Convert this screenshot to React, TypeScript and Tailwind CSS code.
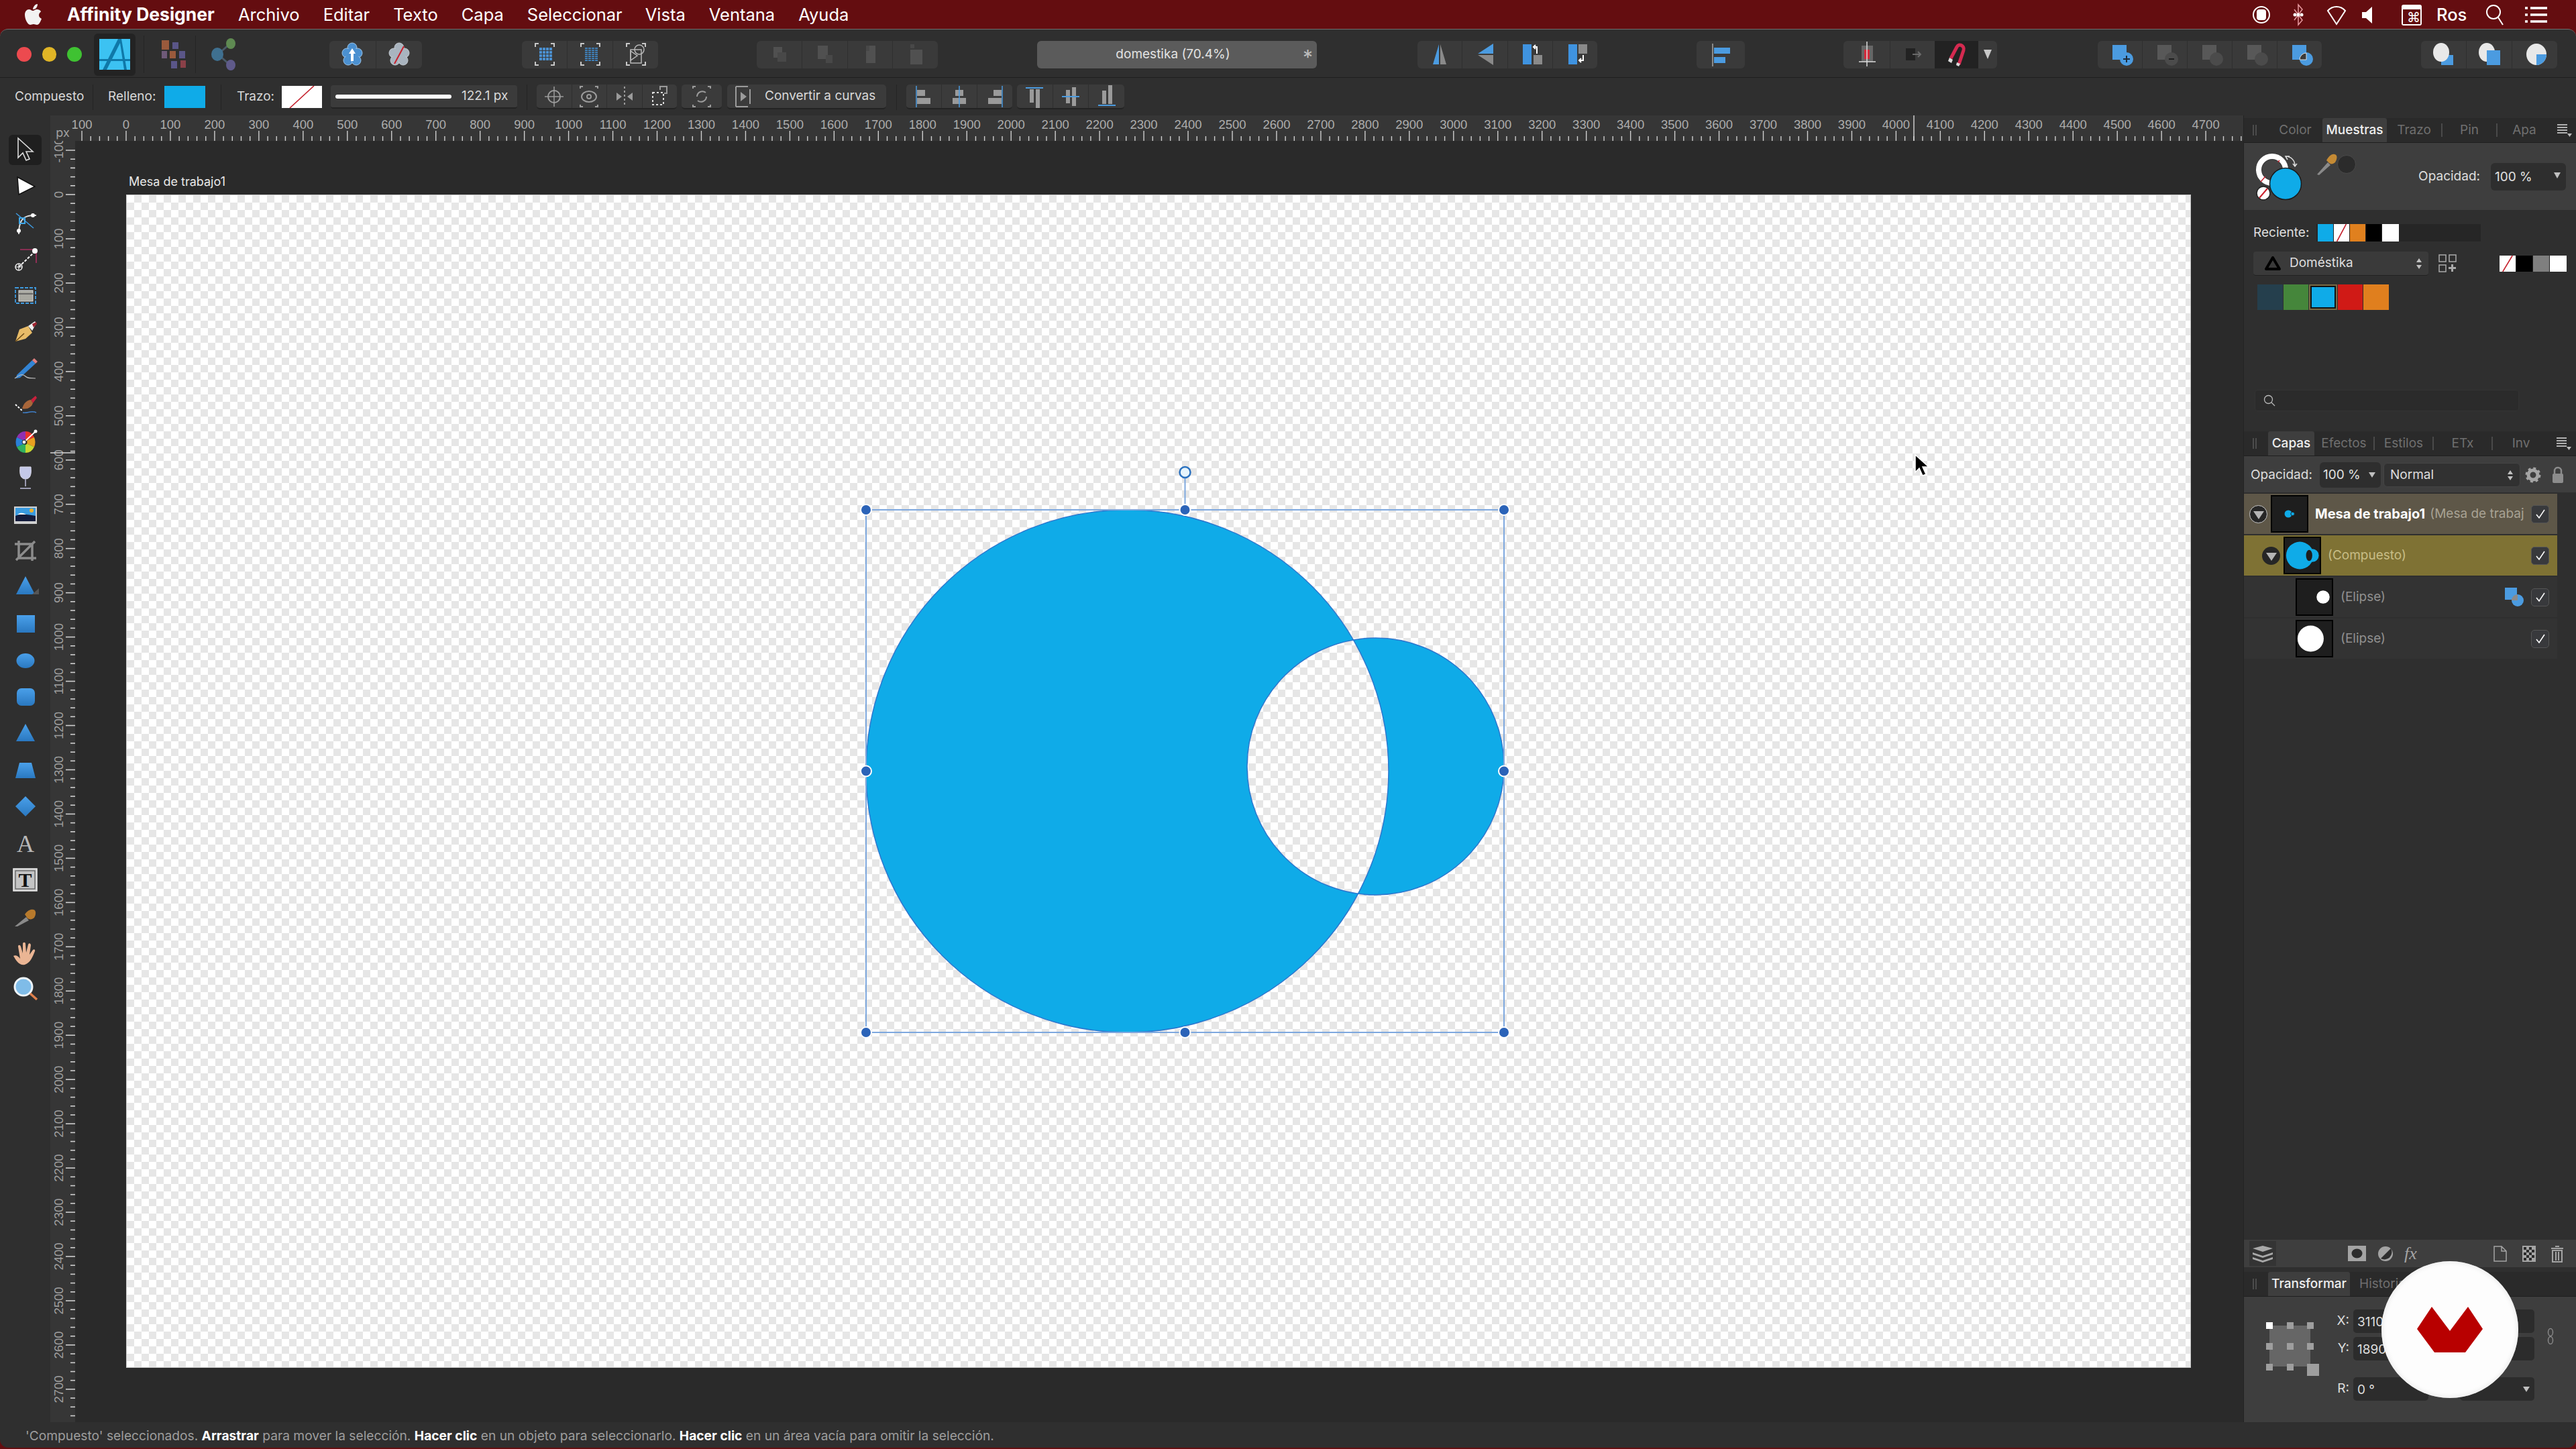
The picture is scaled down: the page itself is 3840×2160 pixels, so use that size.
import type { ReactNode } from "react";

const BLUE = "#0fabe8";

function Group({ className, children }: { className: string; children: ReactNode }) {
  return <div className={`flex h-[41px] shrink-0 overflow-hidden rounded-[6px] bg-[#3a3a3a] ${className}`}>{children}</div>;
}

function Cell({ children, dark }: { children?: ReactNode; dark?: boolean }) {
  return (
    <div className={`flex flex-1 items-center justify-center border-r border-[#2f2f2f] last:border-r-0 ${dark ? "bg-[#222222]" : ""}`}>
      {children}
    </div>
  );
}

function Ico({ children, w = 44, h = 38 }: { children: ReactNode; w?: number; h?: number }) {
  return (
    <svg width={w} height={h} viewBox={`0 0 ${w} ${h}`} className="shrink-0">
      {children}
    </svg>
  );
}

function Flower({ off }: { off?: boolean }) {
  const c = off ? "#a9b4bf" : "#4b90d0";
  return (
    <Ico>
      <g fill={c} stroke={off ? "#c6ccd2" : "#9cc4e8"} strokeWidth="1">
        <circle cx="22" cy="9" r="7" />
        <circle cx="14" cy="17" r="7" />
        <circle cx="30" cy="17" r="7" />
        <circle cx="16" cy="28" r="7" />
        <circle cx="28" cy="28" r="7" />
      </g>
      <circle cx="22" cy="19" r="10" fill={c} />
      {off ? (
        <path d="M15 33 29 7" stroke="#c8202c" strokeWidth="2" />
      ) : (
        <path d="M22 10 17 18h3v11h4V18h3z" fill="#fff" />
      )}
    </Ico>
  );
}

function Brackets({ children }: { children: ReactNode }) {
  return (
    <Ico>
      <path d="M8 8V3h5M31 3h5v5M36 30v5h-5M13 35H8v-5" fill="none" stroke="#c8c8c8" strokeWidth="2" />
      {children}
    </Ico>
  );
}

function Bars({ fine }: { fine?: boolean }) {
  const rows = fine ? [9, 12, 15, 18, 21, 24, 27] : [9, 14, 19, 24];
  return (
    <>
      {rows.map((y) =>
        [14, 19, 24, 29].map((x) => (
          <rect key={`${x}-${y}`} x={x} y={y} width="4" height={fine ? 2 : 4} fill={fine ? "#3f7fb8" : "#4b90d0"} />
        )),
      )}
    </>
  );
}

function Dim({ a, b }: { a: string; b: string }) {
  return (
    <Ico>
      <path d={a} fill="#505050" />
      <path d={b} fill="#484848" />
    </Ico>
  );
}

function FlipV() {
  return (
    <Ico>
      <path d="M21 4v30H12z" fill="#4b9be0" />
      <path d="M23 4v30h9z" fill="#8a8a8a" />
    </Ico>
  );
}

function FlipH() {
  return (
    <Ico>
      <path d="M35 3v15H12z" fill="#4b9be0" />
      <path d="M35 35V20H12z" fill="#8a8a8a" />
    </Ico>
  );
}

function Rot({ down }: { down?: boolean }) {
  return (
    <Ico>
      <rect x={down ? 12 : 11} y="4" width="13" height="30" fill="#3f93e0" />
      <rect x="27" y={down ? 4 : 20} width="13" height="14" fill="#8a8a8a" />
      <path d={down ? "M34 20v8h-5M31 25l-3 3 3 3" : "M32 18V8h-3M30 5l-3 3 3 3"} fill="none" stroke="#fff" strokeWidth="2" />
    </Ico>
  );
}

function AlignLeftBlue() {
  return (
    <Ico w={40}>
      <path d="M8 3v34" stroke="#8a8a8a" strokeWidth="2" />
      <rect x="10" y="9" width="24" height="9" fill="#4b9be0" />
      <rect x="10" y="23" width="17" height="9" fill="#4b9be0" />
    </Ico>
  );
}

function BoolOp({ tint, sign, third }: { tint: boolean; sign?: string; third?: boolean }) {
  const a = tint ? "#4b9be0" : "#585858";
  return (
    <Ico>
      <rect x="11" y="5" width="21" height="22" fill={a} />
      <circle cx="32" cy="26" r="10" fill={third ? "#4b9be0" : tint ? "#4b9be0" : "#4b4b4b"} />
      {third && <path d="M22 27h10V17a10 10 0 0 0-10 10z" fill="#3a3a3a" stroke="#dddddd" strokeWidth="1" />}
      {sign === "+" && <path d="M27 26h10M32 21v10" stroke="#1e2a38" strokeWidth="2" />}
      {sign === "-" && <path d="M28 26h8" stroke="#1e1e1e" strokeWidth="2" />}
    </Ico>
  );
}

function Order({ variant }: { variant: number }) {
  return (
    <Ico>
      {variant === 0 && (
        <>
          <rect x="18" y="20" width="18" height="15" fill="#4b9be0" />
          <ellipse cx="18" cy="16" rx="12" ry="14" fill="#e8e8e8" />
        </>
      )}
      {variant === 1 && (
        <>
          <ellipse cx="18" cy="16" rx="12" ry="14" fill="#e8e8e8" />
          <rect x="18" y="13" width="20" height="22" fill="#4b9be0" />
        </>
      )}
      {variant === 2 && (
        <>
          <ellipse cx="24" cy="19" rx="15" ry="16" fill="#e8e8e8" />
          <path d="M24 19h15a15 16 0 0 1-15 16z" fill="#4b9be0" />
        </>
      )}
    </Ico>
  );
}

function Ctx({ children }: { children: ReactNode }) {
  return (
    <svg width="34" height="36" viewBox="0 0 34 36" fill="none" stroke="#9b9b9b" strokeWidth="2">
      {children}
    </svg>
  );
}

function Sep({ className }: { className: string }) {
  return <div className={`h-[38px] w-px shrink-0 bg-[#242424] ${className}`} />;
}

function CtxGroup({ className, children }: { className: string; children: ReactNode }) {
  return (
    <div className={`flex h-[37px] shrink-0 overflow-hidden rounded-[5px] border-b-2 border-[#232323] bg-[#3b3b3b] ${className}`}>
      {children}
    </div>
  );
}

function AlignIcon({ axis, pos }: { axis: "v" | "h"; pos: number }) {
  if (axis === "v") {
    const lx = [6, 17, 28][pos];
    const w1 = 12;
    const w2 = 20;
    const x = (w: number) => (pos === 0 ? lx + 1 : pos === 1 ? lx - w / 2 : lx - w - 1);
    return (
      <svg width="34" height="36" viewBox="0 0 34 36">
        <rect x={x(w1)} y="8" width={w1} height="9" fill="#9a9a9a" />
        <rect x={x(w2)} y="20" width={w2} height="9" fill="#9a9a9a" />
        <path d={`M${lx} 2v32`} stroke="#4b9be0" strokeWidth="1.5" />
      </svg>
    );
  }
  const ly = [5, 18, 31][pos];
  const y = (h: number) => (pos === 0 ? ly + 2 : pos === 1 ? ly - h / 2 : ly - h - 2);
  return (
    <svg width="34" height="36" viewBox="0 0 34 36">
      <rect x="10" y={y(20)} width="6" height="20" fill="#9a9a9a" />
      <rect x="19" y={y(28)} width="6" height="28" fill="#9a9a9a" />
      <path d={`M4 ${ly}h26`} stroke="#4b9be0" strokeWidth="2" />
    </svg>
  );
}

function TitleBar() {
  return (
    <div className="flex h-[72px] shrink-0 items-center border-b border-[#1f1f1f] pt-[3px]">
      <div className="ml-[25px] flex w-[97px] shrink-0 gap-[16px]">
        <div className="h-[22px] w-[22px] rounded-full bg-[#ec4a4f]" />
        <div className="h-[22px] w-[22px] rounded-full bg-[#e0b526]" />
        <div className="h-[22px] w-[22px] rounded-full bg-[#3fc232]" />
      </div>
      <div className="ml-[18px] flex h-[63px] w-[62px] shrink-0 items-center justify-center rounded-[6px] bg-[#232323]">
        <svg width="46" height="46" viewBox="0 0 46 46">
          <rect width="46" height="46" fill="#3cc2f2" />
          <path d="M28 0 5 46h6L31 6l6 40h4L33 0z" fill="#0f78a8" />
          <path d="M0 30h46v3H0z" fill="#0f78a8" />
        </svg>
      </div>
      <div className="ml-[12px] h-[56px] w-px shrink-0 bg-[#242424]" />
      <div className="ml-[20px] flex w-[46px] shrink-0 justify-center">
        <svg width="46" height="46" viewBox="0 0 46 46">
          <rect x="6" y="2" width="11" height="14" fill="#9a5a3c" />
          <rect x="22" y="5" width="9" height="10" fill="#5a5688" />
          <rect x="6" y="18" width="8" height="11" fill="#6e5a78" />
          <rect x="18" y="18" width="9" height="11" fill="#9a5a3c" />
          <rect x="32" y="18" width="9" height="11" fill="#5a5688" />
          <rect x="20" y="33" width="9" height="11" fill="#5a5688" />
          <rect x="34" y="32" width="8" height="11" fill="#8a4048" />
        </svg>
      </div>
      <div className="ml-[10px] h-[56px] w-px shrink-0 bg-[#242424]" />
      <div className="ml-[16px] flex w-[50px] shrink-0 justify-center">
        <svg width="44" height="50" viewBox="0 0 44 50">
          <path d="M14 25 32 9M14 25l18 16" stroke="#4a5a68" strokeWidth="3" />
          <ellipse cx="33" cy="9" rx="7" ry="8" fill="#5f8a52" />
          <ellipse cx="13" cy="25" rx="9" ry="10" fill="#3f7090" />
          <ellipse cx="33" cy="41" rx="7" ry="8" fill="#5f5a8a" />
        </svg>
      </div>
      <Group className="ml-[133px] w-[138px]">
        <Cell><Flower /></Cell>
        <Cell><Flower off /></Cell>
      </Group>
      <Group className="ml-[149px] w-[203px]">
        <Cell><Brackets><Bars /></Brackets></Cell>
        <Cell><Brackets><Bars fine /></Brackets></Cell>
        <Cell>
          <Brackets>
            <rect x="14" y="12" width="16" height="20" fill="none" stroke="#b8b8b8" strokeWidth="1.5" />
            <circle cx="27" cy="12" r="7" fill="none" stroke="#b8b8b8" strokeWidth="1.5" />
            <path d="M14 14v14l10-7z" fill="none" stroke="#b8b8b8" strokeWidth="1.5" />
          </Brackets>
        </Cell>
      </Group>
      <Group className="ml-[147px] w-[270px]">
        <Cell><Dim a="M14 8h13v16h-13z" b="M20 16h13v14h-13z" /></Cell>
        <Cell><Dim a="M12 6h15v20H12z" b="M24 20h10v12H24z" /></Cell>
        <Cell><Dim a="M16 6h14v26H16z" b="M16 6h5v8h-5z" /></Cell>
        <Cell><Dim a="M14 12h18v22H14z" b="M14 4h6v6h-6z" /></Cell>
      </Group>
      <div className="relative ml-[148px] flex h-[41px] w-[417px] shrink-0 items-center justify-center rounded-[6px] bg-[#5b5b5b] text-[19px] text-[#e2e2e2]">
        <span className="mr-[12px]">domestika (70.4%)</span>
        <span className="absolute right-[6px] top-[6px] text-[30px] leading-[36px] text-[#bdbdbd]">*</span>
      </div>
      <Group className="ml-[150px] w-[268px]">
        <Cell><FlipV /></Cell>
        <Cell><FlipH /></Cell>
        <Cell><Rot /></Cell>
        <Cell><Rot down /></Cell>
      </Group>
      <Group className="ml-[148px] w-[72px]">
        <Cell><AlignLeftBlue /></Cell>
      </Group>
      <Group className="ml-[147px] w-[229px]">
        <div className="flex w-[70px] items-center justify-center border-r border-[#2f2f2f]">
          <Ico>
            <path d="M14 6h17v24H14z" fill="#666" />
            <path d="M18 12h8v14h-8z" fill="#d22a3c" />
            <path d="M10 30h25M22 0v37" stroke="#ddd" strokeWidth="1.5" />
          </Ico>
        </div>
        <div className="flex w-[66px] items-center justify-center">
          <Ico>
            <rect x="12" y="10" width="14" height="18" fill="#222" />
            <path d="M22 19h12m-4-4 4 4-4 4" stroke="#6a6a6a" strokeWidth="2" fill="none" />
          </Ico>
        </div>
        <div className="flex w-[65px] items-center justify-center bg-[#222222]">
          <Ico>
            <path d="M13 25 22 8c3-6 12-2 10 5l-7 21" fill="none" stroke="#d52a50" strokeWidth="5" />
            <path d="M11 24l5 3-2 5-5-3zM22 31l5 2-2 4-4-2z" fill="#ddd" />
          </Ico>
        </div>
        <div className="flex flex-1 items-start justify-center pt-[13px]">
          <svg width="12" height="14" viewBox="0 0 12 14"><path d="M0 0h12L6 14z" fill="#c8c8c8" /></svg>
        </div>
      </Group>
      <Group className="ml-[150px] w-[334px]">
        <Cell><BoolOp tint sign="+" /></Cell>
        <Cell><BoolOp tint={false} sign="-" /></Cell>
        <Cell><BoolOp tint={false} /></Cell>
        <Cell><BoolOp tint={false} /></Cell>
        <Cell><BoolOp tint third /></Cell>
      </Group>
      <Group className="ml-[148px] w-[203px]">
        <Cell><Order variant={0} /></Cell>
        <Cell><Order variant={1} /></Cell>
        <Cell><Order variant={2} /></Cell>
      </Group>
    </div>
  );
}

function NoneSwatch({ className }: { className: string }) {
  return (
    <div className={`relative shrink-0 overflow-hidden bg-white ${className}`}>
      <svg className="absolute inset-0 h-full w-full" viewBox="0 0 40 40" preserveAspectRatio="none">
        <path d="M8 40 32 0" stroke="#c4202c" strokeWidth="1.6" vectorEffect="non-scaling-stroke" />
      </svg>
    </div>
  );
}

function ContextBar() {
  return (
    <div className="flex h-[56px] shrink-0 items-center pt-[1px] text-[19px] text-[#d8d8d8]">
      <span className="ml-[22px] w-[103px] shrink-0">Compuesto</span>
      <Sep className="ml-[13px]" />
      <span className="ml-[22px] w-[72px] shrink-0">Relleno:</span>
      <div className="ml-[12px] h-[33px] w-[61px] shrink-0 bg-[#0fabe8]" />
      <Sep className="ml-[23px]" />
      <span className="ml-[23px] w-[55px] shrink-0">Trazo:</span>
      <NoneSwatch className="ml-[12px] h-[33px] w-[60px]" />
      <div className="ml-[13px] flex h-[35px] w-[278px] shrink-0 items-center rounded-[4px] border-b-2 border-[#232323] bg-[#3b3b3b] pl-[7px]">
        <div className="h-[6px] w-[173px] rounded-full bg-white" />
        <span className="ml-[15px] whitespace-nowrap text-[19px]">122.1 px</span>
      </div>
      <Sep className="ml-[14px]" />
      <CtxGroup className="ml-[14px] w-[209px]">
        <Cell><Ctx><circle cx="17" cy="18" r="9" /><path d="M17 3v30M3 18h28" strokeWidth="1.5" /></Ctx></Cell>
        <Cell><Ctx><path d="M4 6V3h4M26 3h4v3M30 30v3h-4M8 33H4v-3" /><ellipse cx="17" cy="18" rx="11" ry="8" /><circle cx="17" cy="18" r="3" /></Ctx></Cell>
        <Cell><Ctx><path d="M17 3v30" strokeDasharray="3 3" /><path d="M5 12l8 6-8 6zM29 12l-8 6 8 6z" fill="#9b9b9b" stroke="none" /></Ctx></Cell>
        <Cell><Ctx><rect x="7" y="12" width="16" height="18" stroke="#ddd" strokeDasharray="3 3" /><path d="M18 8V3h10v10h-4" /></Ctx></Cell>
      </CtxGroup>
      <CtxGroup className="ml-[7px] w-[60px]">
        <Cell><Ctx><path d="M4 6V3h4M26 3h4v3M30 30v3h-4M8 33H4v-3" /><path d="M10 18a8 8 0 0 1 13-6m1 6a8 8 0 0 1-13 6" /></Ctx></Cell>
      </CtxGroup>
      <CtxGroup className="ml-[8px] w-[237px] items-center pl-[8px]">
        <Ctx><path d="M5 3h18M5 33h18M5 3v30M26 7v22" /><path d="M12 11l9 7-9 7z" fill="#9b9b9b" stroke="none" /></Ctx>
        <span className="ml-[14px] whitespace-nowrap text-[19px]">Convertir a curvas</span>
      </CtxGroup>
      <Sep className="ml-[15px]" />
      <CtxGroup className="ml-[14px] w-[158px]">
        {[0, 1, 2].map((p) => (
          <Cell key={p}><AlignIcon axis="v" pos={p} /></Cell>
        ))}
      </CtxGroup>
      <CtxGroup className="ml-[7px] w-[160px]">
        {[0, 1, 2].map((p) => (
          <Cell key={p}><AlignIcon axis="h" pos={p} /></Cell>
        ))}
      </CtxGroup>
    </div>
  );
}

const wheelColors = ["#e8342a", "#e8a020", "#c8d830", "#30b060", "#2a80d8", "#9030b0"];

const toolIcons: ReactNode[] = [
  <path d="M11 5v29l7-7 5 11 5-2-5-11h10z" fill="none" stroke="#dcdcdc" strokeWidth="1.6" />,
  <path d="M10 8 36 22 12 34z" fill="#fff" stroke="#111" strokeWidth="1.5" />,
  <>
    <path d="M8 8l26 22" stroke="#3f9be0" strokeWidth="1.5" />
    <path d="M16 19c4-7 12-8 22-8M16 19c-3 5-4 10-4 20" fill="none" stroke="#ddd" strokeWidth="2" />
    <rect x="13" y="15" width="8" height="8" fill="none" stroke="#3fa7e8" strokeWidth="2" />
    <circle cx="33" cy="11" r="3" fill="#fff" />
    <circle cx="12" cy="34" r="3" fill="#fff" />
  </>,
  <>
    <path d="M14 8h24v20" fill="none" stroke="#a83060" strokeWidth="1.6" />
    <path d="M12 34 36 11" stroke="#fff" strokeWidth="2" strokeDasharray="4 2" />
    <circle cx="36" cy="10" r="4" fill="#fff" />
    <circle cx="12" cy="34" r="5" fill="none" stroke="#eee" strokeWidth="1.5" />
    <path d="M7 34h10M12 29v10" stroke="#eee" strokeWidth="1.2" />
  </>,
  <>
    <rect x="7" y="10" width="30" height="23" fill="none" stroke="#3f9be0" strokeWidth="1.8" strokeDasharray="5 2" />
    <rect x="12" y="14" width="21" height="16" fill="#a8a8a0" stroke="#ddd" />
    <path d="M12 19h21" stroke="#555" strokeWidth="1.5" />
  </>,
  <>
    <path d="M7 36 13 18 26 13l6 10-10 9z" fill="#e8bc68" />
    <path d="M7 36 20 24" stroke="#6a4a18" strokeWidth="1.5" />
    <path d="M26 13 36 6l2 3-6 11z" fill="#efefef" />
    <path d="M32 10l6-3 1 3-5 5z" fill="#9c2430" />
  </>,
  <>
    <path d="M9 31 32 9l5 5-23 21-6 1z" fill="#3384d4" />
    <path d="M32 9l3-3 5 5-3 3z" fill="#e08080" />
    <path d="M6 36c8-6 12-7 16-3s8 2 15 3" fill="none" stroke="#bbb" strokeWidth="1.2" />
  </>,
  <>
    <path d="M30 14l7-6 2 3-6 8z" fill="#c8203c" />
    <path d="M17 27c2-8 8-13 13-13l3 5c-2 6-8 10-16 8z" fill="#a8663a" />
    <path d="M7 21 18 31" stroke="#fff" strokeWidth="2" strokeDasharray="3 2" />
    <path d="M18 33c7 2 12-4 20 0" fill="none" stroke="#3f7fc8" strokeWidth="1.5" />
  </>,
  <>
    <g transform="rotate(-90 22 23)">
      {wheelColors.map((c, i) => (
        <ellipse key={c} cx="22" cy="23" rx="10" ry="8.5" fill="none" stroke={c} strokeWidth="12" pathLength="60" strokeDasharray="10 50" strokeDashoffset={-i * 10} />
      ))}
    </g>
    <path d="M20 23 36 8" stroke="#fff" strokeWidth="1.8" />
    <circle cx="20" cy="23" r="3" fill="#fff" stroke="#222" />
    <circle cx="37" cy="7" r="2.5" fill="#fff" />
  </>,
  <>
    <path d="M14 5h16c1 10 0 18-8 18S13 15 14 5z" fill="#c4c8e8" stroke="#d8d8e8" />
    <path d="M22 23v11M14 37h16" stroke="#9a9ab0" strokeWidth="2" />
  </>,
  <>
    <rect x="5" y="10" width="34" height="26" fill="#d0d0d0" />
    <rect x="7" y="12" width="30" height="20" fill="#3a9be0" />
    <path d="M7 24c8-4 20-2 30 0v8H7z" fill="#141c3c" />
    <path d="M10 22c5-4 10-2 13 0z" fill="#fff" />
    <circle cx="31" cy="16" r="3" fill="#e8b030" />
  </>,
  <path d="M8 36 36 8M12 7v26h26M6 12h26v25" fill="none" stroke="#8c8c8c" strokeWidth="3.5" />,
  <>
    <path d="M22 5 36 32H8z" fill="url(#toolBlue)" />
    <path d="M42 32v-9l-10 9z" fill="#555" />
  </>,
  <rect x="9" y="9" width="27" height="26" fill="url(#toolBlue)" />,
  <ellipse cx="22" cy="22" rx="13.5" ry="11" fill="url(#toolBlue)" />,
  <rect x="9" y="9" width="27" height="26" rx="7" fill="url(#toolBlue)" />,
  <path d="M22 8 36 34H8z" fill="url(#toolBlue)" />,
  <path d="M13 11h18l6 23H7z" fill="url(#toolBlue)" />,
  <path d="M22 7 37 22 22 37 7 22z" fill="url(#toolBlue)" />,
  <text x="22" y="35" textAnchor="middle" fontSize="36" fill="#b8b8b8" fontFamily="'Liberation Serif', serif">A</text>,
  <>
    <rect x="4" y="6" width="35" height="33" fill="#c4c4c4" stroke="#eee" strokeWidth="1.5" />
    <rect x="7" y="9" width="29" height="27" fill="none" stroke="#444" />
    <text x="21.5" y="33" textAnchor="middle" fontSize="30" fontWeight="700" fill="#111" fontFamily="'Liberation Serif', serif">T</text>
  </>,
  <>
    <path d="M6 38 23 24l4 5-17 9z" fill="#8a8a8a" />
    <path d="M21 20c4-6 9-8 13-7s4 7 1 12c-3 3-7 3-10 1z" fill="#b87a2c" />
  </>,
  <path d="M4 27c3-2 7 0 10 4l-3-18c0-3 3-3 4 0l3 10 0-14c0-3 4-3 4 0l1 13 3-12c1-3 4-2 4 1l-2 14 5-7c2-2 4 0 3 2-3 7-6 17-15 20-8 2-13-6-17-13z" fill="#eab594" />,
  <>
    <circle cx="19" cy="19" r="13" fill="#7fbce8" stroke="#eef4f8" strokeWidth="3" />
    <path d="M29 29l10 9" stroke="#e0804c" strokeWidth="3.5" />
  </>,
];

function ToolRail() {
  return (
    <div className="flex w-[75px] shrink-0 flex-col items-center pt-[24px]">
      <svg width="0" height="0" className="absolute">
        <defs>
          <linearGradient id="toolBlue" x1="0" y1="0" x2="0" y2="1">
            <stop offset="0" stopColor="#4aa0ea" />
            <stop offset="1" stopColor="#2a78c0" />
          </linearGradient>
        </defs>
      </svg>
      {toolIcons.map((icon, i) => (
        <div key={i} className="flex h-[54.4px] w-[49px] shrink-0 items-center justify-center">
          <div className={`flex h-[45px] w-[49px] items-center justify-center rounded-[6px] ${i === 0 ? "bg-[#1f1f1f]" : ""}`}>
            <svg width="44" height="44" viewBox="0 0 44 44">
              {icon}
            </svg>
          </div>
        </div>
      ))}
    </div>
  );
}

const UNIT = 65.96;

function HRuler() {
  const labels = Array.from({ length: 49 }, (_, i) => i - 1);
  const ticks = Array.from({ length: 49 * 5 }, (_, i) => i);
  return (
    <svg width="3232" height="38" className="block overflow-visible">
      {ticks.map((i) => {
        const x = 76 - UNIT + (i * UNIT) / 5;
        return <line key={i} x1={x} x2={x} y1={i % 5 === 0 ? 23 : 31} y2="38" stroke="#cfcfcf" strokeWidth="1.4" />;
      })}
      {labels.map((n) => (
        <text key={n} x={76 + n * UNIT} y="20" textAnchor="middle" fontSize="18.5" fill="#adadad" fontFamily="'Liberation Sans', sans-serif">
          {Math.abs(n * 100)}
        </text>
      ))}
      <line x1="2741" x2="2741" y1="0" y2="38" stroke="#d8d8d8" strokeWidth="1.4" />
    </svg>
  );
}

function VRuler() {
  const labels = Array.from({ length: 29 }, (_, i) => i - 1);
  const ticks = Array.from({ length: 29 * 5 }, (_, i) => i);
  return (
    <svg width="37" height="1910" className="block">
      {ticks.map((i) => {
        const y = 80 - UNIT + (i * UNIT) / 5;
        return <line key={i} x1={i % 5 === 0 ? 23 : 30} x2="37" y1={y} y2={y} stroke="#cfcfcf" strokeWidth="1.6" />;
      })}
      {labels.map((n) => (
        <text key={n} x="0" y="0" transform={`translate(19 ${80 + n * UNIT}) rotate(-90)`} textAnchor="middle" fontSize="18.5" fill="#9f9f9f" fontFamily="'Liberation Sans', sans-serif">
          {n * 100}
        </text>
      ))}
      <line x1="0" x2="37" y1="465" y2="465" stroke="#d8d8d8" strokeWidth="1.4" />
    </svg>
  );
}

function Handle({ cx, cy }: { cx: number; cy: number }) {
  return <circle cx={cx} cy={cy} r="8" fill="#2b63b8" stroke="#ffffff" strokeWidth="2" />;
}

// the selected compound: two ellipses, their overlap knocked out
function CompoundShape() {
  const x0 = 1102;
  const y0 = 469;
  const x1 = 2053;
  const y1 = 1248;
  const mx = (x0 + x1) / 2;
  const my = (y0 + y1) / 2;
  return (
    <svg width="3078" height="1749" className="absolute left-0 top-0">
      <path
        fillRule="evenodd"
        fill={BLUE}
        stroke="#2c77cf"
        strokeWidth="1.5"
        d={`M${x0} ${my}a389.5 389.5 0 1 0 779 0a389.5 389.5 0 1 0 -779 0z M1670 851.5a191.5 191.5 0 1 0 383 0a191.5 191.5 0 1 0 -383 0z`}
      />
      <rect x={x0} y={y0} width={x1 - x0} height={y1 - y0} fill="none" stroke="#7ea8de" strokeWidth="2" />
      <line x1={mx} x2={mx} y1={y0} y2="413" stroke="#7ea8de" strokeWidth="2" />
      <circle cx={mx} cy="413" r="8" fill="#e6f4fc" stroke="#2b72c0" strokeWidth="2.5" />
      {[x0, mx, x1].flatMap((cx) =>
        [y0, my, y1].map((cy) => (cx === mx && cy === my ? null : <Handle key={`${cx}-${cy}`} cx={cx} cy={cy} />)),
      )}
    </svg>
  );
}

function Canvas() {
  return (
    <div className="relative flex-1 bg-[#2a2a2a] pl-[76px] pt-[80px]">
      <div className="absolute left-[80px] top-[50px] text-[18px] leading-[22px] text-[#e8e8e8]">Mesa de trabajo1</div>
      <div className="relative h-[1749px] w-[3078px] border border-[#c8c8c8] bg-[repeating-conic-gradient(#e6e6e6_0%_25%,#ffffff_0%_50%)] bg-size-[22px_22px]">
        <CompoundShape />
      </div>
      <svg width="28" height="36" viewBox="0 0 28 36" className="absolute left-[2741px] top-[466px]">
        <path d="M2 2v26l6-6 5 11 5-2-5-11h9z" fill="#000" stroke="#fff" strokeWidth="1.5" />
      </svg>
    </div>
  );
}

function Tabs({ tabs, active, menu = true }: { tabs: { label: string; w: string; sep?: boolean }[]; active: string; menu?: boolean }) {
  return (
    <div className="flex h-[37px] shrink-0 items-stretch border-b border-[#1f1f1f] bg-[#2a2a2a] text-[19px] leading-[22px]">
      <div className="flex w-[36px] shrink-0 items-center pl-[13px]">
        <div className="h-[16px] w-[6px] border-x-2 border-[#4c4c4c]" />
      </div>
      {tabs.map((t) => (
        <div
          key={t.label}
          className={`flex shrink-0 items-center justify-center ${t.w} ${
            t.label === active ? "rounded-t-[3px] bg-[#3e3e3e] font-medium text-[#eeeeee]" : "text-[#6f6f6f]"
          }`}
        >
          <span className={t.sep ? "flex h-[20px] w-full items-center justify-center border-r-2 border-[#4a4a4a]" : ""}>{t.label}</span>
        </div>
      ))}
      {menu && (
        <div className="ml-auto flex w-[38px] items-center justify-center">
          <svg width="24" height="20" viewBox="0 0 24 20">
            <path d="M2 2h15M2 6h15M2 10h15M2 14h15" stroke="#dddddd" strokeWidth="1.5" />
            <path d="M17 15h7l-3.500 5z" fill="#bbbbbb" />
          </svg>
        </div>
      )}
    </div>
  );
}

function FillStroke() {
  return (
    <svg width="76" height="76" viewBox="0 0 76 76" className="shrink-0">
      <circle cx="27" cy="28" r="20" fill="none" stroke="#ffffff" strokeWidth="8" />
      <path d="M38 14 10 46" stroke="#c9202c" strokeWidth="1.5" />
      <circle cx="27" cy="28" r="14.500" fill="#444" />
      <circle cx="47" cy="49" r="23.500" fill={BLUE} stroke="#1b1b1b" strokeWidth="1.500" />
      <circle cx="14" cy="63" r="10" fill="#fff" stroke="#222" strokeWidth="1.500" />
      <path d="M8 70 20 56" stroke="#c9202c" strokeWidth="2" />
      <path d="M50 13 47 8l6 0M47 8c8 0 14 6 14 14m-3-3 3 4 3-4" fill="none" stroke="#ddd" strokeWidth="1.500" />
    </svg>
  );
}

function SwatchesPanel() {
  return (
    <div className="flex h-[427px] shrink-0 flex-col">
      <div className="flex h-[100px] shrink-0 items-center bg-[#3e3e3e] pl-[15px] text-[19px] text-[#dddddd]">
        <FillStroke />
        <svg width="32" height="34" viewBox="0 0 32 34" className="ml-[16px] -mt-[36px]">
          <path d="M2 32 18 14l4 4L5 33z" fill="#8a8a8a" />
          <path d="M16 11c3-5 7-10 12-9s4 7 1 12c-3 3-7 3-9 1z" fill="#c48a34" />
        </svg>
        <div className="-mt-[36px] h-[28px] w-[28px] rounded-full border border-[#4a4a4a] bg-[#2b2b2b]" />
        <span className="ml-auto">Opacidad:</span>
        <div className="ml-[16px] mr-[15px] flex h-[41px] w-[112px] items-center justify-between rounded-[6px] bg-[#2e2e2e] pl-[6px] pr-[8px] pt-[2px] text-[#e0e0e0]">
          <span>100 %</span>
          <span className="mb-[6px] h-0 w-0 border-x-[5px] border-t-[9px] border-x-transparent border-t-[#c0c0c0]" />
        </div>
      </div>
      <div className="flex flex-1 flex-col bg-[#2f2f2f] pl-[14px] text-[19px] text-[#dedede]">
        <div className="mt-[21px] flex h-[26px] items-center">
          <span className="w-[94px] shrink-0">Reciente:</span>
          <div className="flex h-[26px] w-[245px] gap-[1px] bg-[#262626] pl-[2px]">
            <div className="h-full w-[23px] bg-[#0fabe8]" />
            <NoneSwatch className="h-full w-[23px]" />
            <div className="h-full w-[23px] bg-[#e0801e]" />
            <div className="h-full w-[23px] bg-black" />
            <div className="h-full w-[25px] bg-white" />
          </div>
        </div>
        <div className="mt-[15px] flex h-[36px] items-center">
          <div className="flex h-[36px] w-[261px] shrink-0 items-center rounded-[4px] border-b border-[#222] bg-[#3a3a3a] pl-[16px]">
            <svg width="26" height="24" viewBox="0 0 26 24"><path d="M13 3 23 20H3z" fill="none" stroke="#000" strokeWidth="4" strokeLinejoin="round" /></svg>
            <span className="ml-[12px]">Doméstika</span>
            <span className="ml-auto mr-[10px] flex flex-col gap-[4px]">
              <span className="h-0 w-0 border-x-[4px] border-b-[6px] border-x-transparent border-b-[#c0c0c0]" />
              <span className="h-0 w-0 border-x-[4px] border-t-[6px] border-x-transparent border-t-[#c0c0c0]" />
            </span>
          </div>
          <svg width="28" height="28" viewBox="0 0 28 28" className="ml-[15px] shrink-0">
            <g fill="none" stroke="#aaa" strokeWidth="1.500">
              <rect x="1" y="1" width="10" height="10" />
              <rect x="16" y="1" width="10" height="10" />
              <rect x="1" y="16" width="10" height="10" />
            </g>
            <path d="M15 19h4v-4h3v4h4v3h-4v4h-3v-4h-4z" fill="#aaa" />
          </svg>
          <div className="ml-[63px] flex h-[24px] gap-[1px] bg-[#1f1f1f]">
            <NoneSwatch className="h-full w-[24px]" />
            <div className="h-full w-[24px] bg-black" />
            <div className="h-full w-[24px] bg-[#7f7f7f]" />
            <div className="h-full w-[25px] bg-white" />
          </div>
        </div>
        <div className="ml-[6px] mt-[13px] flex h-[38px] w-[196px] gap-[1px]">
          <div className="h-full flex-1 bg-[#253f4d]" />
          <div className="h-full flex-1 bg-[#45863b]" />
          <div className="h-full flex-1 border-2 border-[#7a6a45] bg-[#0fabe8] outline-2 -outline-offset-4 outline-[#111]" />
          <div className="h-full flex-1 bg-[#d01a16]" />
          <div className="h-full flex-1 bg-[#e07f1e]" />
        </div>
        <div className="ml-[2px] mt-[119px] flex h-[32px] w-[394px] items-center rounded-[4px] border border-[#333] bg-[#2b2b2b] pl-[12px]">
          <svg width="18" height="18" viewBox="0 0 18 18" fill="none" stroke="#b8b8b8" strokeWidth="1.300">
            <circle cx="7.500" cy="7.500" r="6" />
            <path d="M12 12l5 5" />
          </svg>
        </div>
      </div>
    </div>
  );
}

function Check() {
  return (
    <div className="flex h-[27px] w-[27px] shrink-0 items-center justify-center rounded-[5px] border border-[#555] bg-[#38393c]">
      <svg width="16" height="16" viewBox="0 0 16 16">
        <path d="M2 9l4 5 8-12" fill="none" stroke="#fff" strokeWidth="1.600" />
      </svg>
    </div>
  );
}

function Chevron({ ring, className }: { ring?: boolean; className: string }) {
  return (
    <div className={`flex h-[27px] w-[27px] shrink-0 items-center justify-center rounded-full bg-[#262626] ${ring ? "border border-[#c8c8c8]" : ""} ${className}`}>
      <span className="mt-[3px] h-0 w-0 border-x-[8px] border-t-[12px] border-x-transparent border-t-[#b4b4b4]" />
    </div>
  );
}

function Thumb({ children }: { children: ReactNode }) {
  return (
    <svg width="56" height="56" viewBox="0 0 56 56" className="shrink-0 border-2 border-black bg-[#1e1e1e]">
      {children}
    </svg>
  );
}

function LayerRow({ bg, children }: { bg: string; children: ReactNode }) {
  return <div className={`flex h-[60px] w-[467px] shrink-0 items-center text-[19px] ${bg}`}>{children}</div>;
}

function LayersPanel() {
  return (
    <div className="flex min-h-0 flex-1 flex-col bg-[#2f2f2f]">
      <div className="flex h-[54px] shrink-0 items-center bg-[#3e3e3e] pl-[10px] pt-[2px] text-[19px] text-[#dddddd]">
        <span className="w-[103px] shrink-0">Opacidad:</span>
        <div className="flex h-[38px] w-[91px] shrink-0 items-center justify-between rounded-[6px] bg-[#2e2e2e] pl-[5px] pr-[8px] text-[#e0e0e0]">
          <span>100 %</span>
          <span className="h-0 w-0 border-x-[5px] border-t-[8px] border-x-transparent border-t-[#c0c0c0]" />
        </div>
        <div className="ml-[4px] flex h-[36px] w-[204px] shrink-0 items-center justify-between rounded-[6px] border border-[#444] bg-[#313131] pl-[9px] pr-[10px]">
          <span>Normal</span>
          <span className="flex flex-col gap-[3px]">
            <span className="h-0 w-0 border-x-[4px] border-b-[6px] border-x-transparent border-b-[#c0c0c0]" />
            <span className="h-0 w-0 border-x-[4px] border-t-[6px] border-x-transparent border-t-[#c0c0c0]" />
          </span>
        </div>
        <svg width="24" height="24" viewBox="0 0 24 24" className="ml-[7px] shrink-0">
          <circle cx="12" cy="12" r="7" fill="none" stroke="#a4a4a4" strokeWidth="5" />
          <circle cx="12" cy="12" r="10" fill="none" stroke="#a4a4a4" strokeWidth="3" strokeDasharray="4 3.850" />
        </svg>
        <svg width="20" height="26" viewBox="0 0 20 26" className="ml-[15px] shrink-0">
          <path d="M5 12V7a5 5 0 0 1 10 0v5" fill="none" stroke="#8c8c8c" strokeWidth="2.500" />
          <rect x="2" y="11" width="16" height="14" rx="2" fill="#8c8c8c" />
        </svg>
      </div>
      <div className="flex flex-col gap-[2px] pt-[2px]">
        <LayerRow bg="bg-[#5e5748]">
          <Chevron ring className="ml-[8px] mr-[5px]" />
          <Thumb>
            <circle cx="26" cy="28" r="6" fill={BLUE} />
            <circle cx="33" cy="28" r="3" fill={BLUE} stroke="#1e1e1e" />
          </Thumb>
          <span className="ml-[10px] whitespace-nowrap text-[20px] font-bold text-white">Mesa de trabajo1</span>
          <span className="ml-[7px] whitespace-nowrap text-[#a8a294]">(Mesa de trabaj</span>
          <span className="ml-auto mr-[12px]"><Check /></span>
        </LayerRow>
        <LayerRow bg="bg-[#7f7234]">
          <Chevron className="ml-[27px] mr-[5px]" />
          <Thumb>
            <circle cx="24" cy="28" r="22" fill={BLUE} />
            <circle cx="44" cy="28" r="10.500" fill={BLUE} />
            <ellipse cx="39" cy="28" rx="5" ry="9" fill="#1e1e1e" />
          </Thumb>
          <span className="ml-[10px] text-[#c7bd86]">(Compuesto)</span>
          <span className="ml-auto mr-[12px]"><Check /></span>
        </LayerRow>
        <LayerRow bg="bg-[#333333]">
          <span className="ml-[77px]" />
          <Thumb>
            <circle cx="42" cy="28" r="10.500" fill="#fff" />
          </Thumb>
          <span className="ml-[11px] text-[#909090]">(Elipse)</span>
          <svg width="28" height="28" viewBox="0 0 28 28" className="ml-auto">
            <rect x="0" y="0" width="18" height="18" fill="#4b9be0" />
            <circle cx="19" cy="19" r="9" fill="#4b9be0" />
            <path d="M10 19a9 9 0 0 1 9-9v9z" fill="#8a8a8a" />
          </svg>
          <span className="ml-[11px] mr-[12px]"><Check /></span>
        </LayerRow>
        <LayerRow bg="bg-[#333333]">
          <span className="ml-[77px]" />
          <Thumb>
            <circle cx="22" cy="28" r="21" fill="#fff" />
          </Thumb>
          <span className="ml-[11px] text-[#909090]">(Elipse)</span>
          <span className="ml-auto mr-[12px]"><Check /></span>
        </LayerRow>
      </div>
    </div>
  );
}

function LayerActions() {
  return (
    <div className="flex h-[41px] shrink-0 items-center bg-[#3e3e3e] pl-[8px]">
      <div className="flex h-[37px] w-[40px] items-center justify-center bg-[#343434]">
        <svg width="32" height="26" viewBox="0 0 32 26" fill="#a8a8a8">
          <path d="M1 5 16 1l15 4-15 5zM1 11l15 5 15-5v3l-15 5-15-5zM1 18l15 5 15-5v3l-15 5-15-5z" />
        </svg>
      </div>
      <svg width="27" height="23" viewBox="0 0 27 23" className="ml-[107px]">
        <rect width="27" height="23" fill="#a4a4a4" />
        <ellipse cx="13.500" cy="11.500" rx="8" ry="7" fill="#2c2c2c" />
      </svg>
      <svg width="24" height="24" viewBox="0 0 24 24" className="ml-[17px]">
        <circle cx="12" cy="12" r="11" fill="#a4a4a4" />
        <path d="M20 4a11 11 0 0 1-15 15z" fill="#2e2e2e" />
      </svg>
      <span className="ml-[16px] font-['Liberation_Serif',serif] text-[26px] italic leading-none text-[#a4a4a4]">fx</span>
      <svg width="20" height="24" viewBox="0 0 20 24" className="ml-[114px]" fill="none" stroke="#a4a4a4" strokeWidth="1.500">
        <path d="M1 1h11l7 7v15H1zM12 1v7h7" />
      </svg>
      <svg width="20" height="24" viewBox="0 0 20 24" className="ml-[23px]">
        <rect width="20" height="24" fill="#a4a4a4" />
        {[2, 6, 10, 14].flatMap((x, cx) =>
          [2, 6, 10, 14, 18].map((y, cy) => ((cx + cy) % 2 ? null : <rect key={`${x}-${y}`} x={x} y={y} width="4" height="4" fill="#2a2a2a" />)),
        )}
      </svg>
      <svg width="18" height="26" viewBox="0 0 18 26" className="ml-[23px]">
        <path d="M0 4h18v2H0zM6 1h6v2H6z" fill="#a4a4a4" />
        <path d="M2 8h14v17H2zM7 10v13M11 10v13" fill="none" stroke="#a4a4a4" strokeWidth="2" />
      </svg>
    </div>
  );
}

function Field({ label, value, right, caret }: { label: string; value: string; right?: boolean; caret?: boolean }) {
  return (
    <div className="flex h-[35px] items-center">
      <span className="w-[40px] shrink-0 pr-[6px] text-right text-[19px] text-[#dddddd]">{label}</span>
      <div className="flex h-[35px] w-[112px] shrink-0 items-center rounded-[5px] bg-[#2c2c2c] pl-[6px] pt-[3px] text-[19px] text-[#dddddd]">{value}</div>
      {right && (
        <div className="ml-[47px] flex h-[35px] w-[111px] shrink-0 items-center justify-end rounded-[5px] bg-[#2c2c2c] pr-[7px]">
          {caret && <span className="h-0 w-0 border-x-[5px] border-t-[8px] border-x-transparent border-t-[#c0c0c0]" />}
        </div>
      )}
    </div>
  );
}

function AnchorGrid() {
  return (
    <div className="relative h-[72px] w-[75px] shrink-0">
      <div className="absolute left-[5px] top-[5px] h-[61px] w-[61px] bg-[#666666]" />
      <div className="relative grid h-[72px] w-[71px] grid-cols-3 grid-rows-3 place-items-start gap-[20.5px]">
        {Array.from({ length: 9 }, (_, i) => (
          <div key={i} className={`${i === 8 ? "h-[18px] w-[18px]" : "h-[10px] w-[10px]"} ${i === 0 ? "bg-white" : "bg-[#9e9e9e]"}`} />
        ))}
      </div>
    </div>
  );
}

function TransformPanel() {
  return (
    <div className="relative flex h-[187px] shrink-0 bg-[#3e3e3e] pl-[33px] pt-[19px]">
      <div className="mt-[19px]">
        <AnchorGrid />
      </div>
      <div className="ml-[15px] flex flex-col">
        <Field label="X:" value="3110" right />
        <div className="mt-[6px]">
          <Field label="Y:" value="1890" right />
        </div>
        <div className="mt-[25px]">
          <Field label="R:" value="0 °" right caret />
        </div>
      </div>
      <svg width="10" height="26" viewBox="0 0 10 26" className="ml-[19px] mt-[27px]" fill="none" stroke="#888" strokeWidth="1.500">
        <ellipse cx="5" cy="7" rx="3.500" ry="5.500" />
        <ellipse cx="5" cy="19" rx="3.500" ry="5.500" />
      </svg>
    </div>
  );
}

function RightPanel() {
  return (
    <div className="flex w-[496px] shrink-0 flex-col border-l border-[#232323] pt-[4px]">
      <Tabs
        active="Muestras"
        tabs={[
          { label: "Color", w: "w-[81px]" },
          { label: "Muestras", w: "w-[96px]" },
          { label: "Trazo", w: "w-[83px]", sep: true },
          { label: "Pin", w: "w-[82px]", sep: true },
          { label: "Apa", w: "w-[80px]" },
        ]}
      />
      <SwatchesPanel />
      <div className="mt-[3px]">
        <Tabs
          active="Capas"
          tabs={[
            { label: "Capas", w: "w-[69px]" },
            { label: "Efectos", w: "w-[90px]", sep: true },
            { label: "Estilos", w: "w-[88px]", sep: true },
            { label: "ETx", w: "w-[88px]", sep: true },
            { label: "Inv", w: "w-[84px]" },
          ]}
        />
      </div>
      <LayersPanel />
      <LayerActions />
      <div className="mt-[7px]">
        <Tabs
          active="Transformar"
          menu={false}
          tabs={[
            { label: "Transformar", w: "w-[122px]" },
            { label: "Historia", w: "w-[97px]" },
          ]}
        />
      </div>
      <TransformPanel />
    </div>
  );
}

function MenuBar() {
  const items = [
    ["Archivo", "ml-[35px]"],
    ["Editar", "ml-[35px]"],
    ["Texto", "ml-[35px]"],
    ["Capa", "ml-[35px]"],
    ["Seleccionar", "ml-[35px]"],
    ["Vista", "ml-[34px]"],
    ["Ventana", "ml-[35px]"],
    ["Ayuda", "ml-[35px]"],
  ];
  return (
    <div className="flex h-[43px] shrink-0 items-center bg-[#640d10] text-[25.5px] leading-none text-white">
      <svg width="28" height="32" viewBox="0 0 28 32" className="ml-[37px] shrink-0" fill="#f2f2f2">
        <path d="M21 17c0-4 3-5 3-6-2-3-5-3-6-3-3 0-4 2-6 2s-3-2-6-2C3 8 0 11 0 16c0 6 4 15 8 15 2 0 3-1 5-1s3 1 5 1c4 0 6-7 7-9-2-1-4-3-4-5zM17 6c1-2 2-3 2-6-2 0-4 1-5 3-1 1-2 3-2 5 2 0 4-1 5-2z" />
      </svg>
      <span className="ml-[35px] text-[26.5px] font-bold">Affinity Designer</span>
      {items.map(([t, c]) => (
        <span key={t} className={c}>{t}</span>
      ))}
      <div className="ml-auto flex items-center">
        <svg width="30" height="32" viewBox="0 0 30 32" fill="none" stroke="#fff" strokeWidth="2">
          <circle cx="15" cy="16" r="12" />
          <rect x="9" y="9" width="12" height="14" rx="3" fill="#fff" />
        </svg>
        <svg width="20" height="36" viewBox="0 0 20 36" className="ml-[30px]" fill="none" stroke="#e89aa0" strokeWidth="1.500">
          <path d="M4 10l12 16-6 7V3l6 7L4 26" />
          <g fill="#fff" stroke="none">
            <circle cx="5" cy="18" r="2.500" />
            <circle cx="10" cy="18" r="2.500" />
            <circle cx="15" cy="18" r="2.500" />
          </g>
        </svg>
        <svg width="32" height="34" viewBox="0 0 32 34" className="ml-[31px]" fill="none" stroke="#fff" strokeWidth="2">
          <path d="M3 11c7-8 19-8 26 0L16 31z" />
        </svg>
        <svg width="18" height="32" viewBox="0 0 18 32" className="ml-[21px]" fill="#fff">
          <path d="M1 12h6l9-8v25l-9-8H1z" />
        </svg>
        <svg width="32" height="34" viewBox="0 0 32 34" className="ml-[41px]">
          <rect x="1" y="2" width="30" height="31" rx="3" fill="#fff" />
          <rect x="3" y="9" width="26" height="22" fill="#640d10" />
          <text x="19" y="28" textAnchor="middle" fontSize="20" fill="#fff" fontFamily="'DejaVu Sans', sans-serif">⌘</text>
        </svg>
        <span className="ml-[21px] w-[45px] font-medium">Ros</span>
        <svg width="28" height="34" viewBox="0 0 28 34" className="ml-[28px]" fill="none" stroke="#fff" strokeWidth="2">
          <circle cx="12" cy="13" r="10" />
          <path d="M19 21l7 11" />
        </svg>
        <svg width="34" height="28" viewBox="0 0 34 28" className="ml-[30px] mr-[43px]" fill="none" stroke="#fff" strokeWidth="3.500">
          <path d="M9 4h25M9 14h25M9 24h25" />
          <path d="M1 4h4M1 14h4M1 24h4" />
        </svg>
      </div>
    </div>
  );
}

export default function App() {
  return (
    <div className="relative flex h-[2160px] w-[3840px] flex-col overflow-hidden bg-[#640d10] font-['Inter','Liberation_Sans',sans-serif]">
      <MenuBar />
      <div className="flex h-[2115px] shrink-0 flex-col overflow-hidden rounded-[12px] border-t border-[#6f6f6f] bg-[#2f2f2f]">
        <TitleBar />
        <ContextBar />
        <div className="flex h-[1948px] shrink-0">
          <ToolRail />
          <div className="flex w-[3269px] shrink-0 flex-col">
            <div className="flex h-[38px] shrink-0 bg-[#363636]">
              <div className="flex w-[37px] shrink-0 items-end justify-center pb-[1px] text-[18px] leading-[22px] text-[#a0a0a0]">px</div>
              <HRuler />
            </div>
            <div className="flex min-h-0 flex-1">
              <div className="w-[37px] shrink-0 overflow-hidden bg-[#363636]">
                <VRuler />
              </div>
              <Canvas />
            </div>
          </div>
          <RightPanel />
        </div>
        <div className="flex flex-1 items-center pl-[38px] pt-[3px] text-[19.2px] text-[#9d9d9d]">
          <span>
            'Compuesto' seleccionados. <b className="text-white">Arrastrar</b> para mover la selección. <b className="text-white">Hacer clic</b> en un objeto para seleccionarlo. <b className="text-white">Hacer clic</b> en un área vacía para omitir la selección.
          </span>
        </div>
      </div>
      <div className="absolute left-[3550px] top-[1880px] flex h-[204px] w-[204px] items-center justify-center rounded-full bg-[#fdfdfd] shadow-[inset_0_0_8px_#e4e4e4]">
        <svg width="100" height="70" viewBox="0 0 100 70">
          <path d="M1 34 23 1l27 36L77 1l22 33-26 35H27z" fill="#b80000" />
        </svg>
      </div>
    </div>
  );
}
